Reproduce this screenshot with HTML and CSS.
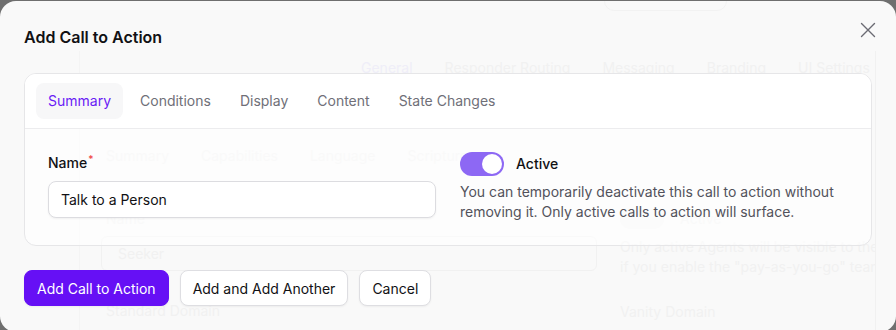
FILE: index.html
```html
<!DOCTYPE html>
<html lang="en">
<head>
<meta charset="utf-8">
<title>Add Call to Action</title>
<link rel="stylesheet" href="styles.css">
</head>
<body>
<div class="backdrop">
  <div class="modal">
    <div class="ghost" aria-hidden="true">
      <div class="g-pill"></div>
      <div class="g-card">
        <div class="g-tabs">
          <span class="g-active">General</span><span>Responder Routing</span><span>Messaging</span><span>Branding</span><span>UI Settings</span>
        </div>
        <div class="g-subtabs">
          <span>Summary</span><span>Capabilities</span><span>Language</span><span>Scripture</span>
        </div>
        <div class="g-grid">
          <div class="g-col">
            <div class="g-label">Name</div>
            <div class="g-input">Seeker</div>
            <div class="g-label g-label2">Standard Domain</div>
          </div>
          <div class="g-col">
            <div class="g-toggle-row"><span class="g-toggle"></span><span>Active</span></div>
            <div class="g-text">Only active Agents will be visible to the public<br>if you enable the "pay-as-you-go" team option</div>
            <div class="g-label g-label3">Vanity Domain</div>
          </div>
        </div>
      </div>
    </div>

    <div class="content">
      <div class="header">
        <h2 class="title">Add Call to Action</h2>
      </div>
      <button class="close" aria-label="Close">
        <svg width="16" height="16" viewBox="0 0 16 16" fill="none" stroke="#6b6b73" stroke-width="1.4" stroke-linecap="round"><path d="M1.5 1.5l13 13M14.5 1.5l-13 13"/></svg>
      </button>

      <div class="card">
        <div class="tabs">
          <span class="tab tab-active">Summary</span>
          <span class="tab">Conditions</span>
          <span class="tab">Display</span>
          <span class="tab">Content</span>
          <span class="tab">State Changes</span>
        </div>
        <div class="card-body">
          <div class="field">
            <label class="label">Name<span class="req">*</span></label>
            <div class="input">Talk to a Person</div>
          </div>
          <div class="field">
            <div class="toggle-row">
              <span class="toggle"><span class="knob"></span></span>
              <span class="label">Active</span>
            </div>
            <p class="help">You can temporarily deactivate this call to action without removing it. Only active calls to action will surface.</p>
          </div>
        </div>
      </div>

      <div class="footer">
        <button class="btn btn-primary">Add Call to Action</button>
        <button class="btn">Add and Add Another</button>
        <button class="btn">Cancel</button>
      </div>
    </div>
  </div>
</div>
</body>
</html>
```

FILE: styles.css
```css
* { box-sizing: border-box; }
html, body { margin: 0; padding: 0; }
body {
  background: #6f6f6f;
  font-family: Inter, "Noto Sans", "Liberation Sans", sans-serif;
  color: #111114;
  width: 896px;
  height: 330px;
  overflow: hidden;
}
.backdrop {
  padding-top: 1px;
}
.modal {
  position: relative;
  width: 896px;
  height: 331px;
  background: #f9f9f9;
  border-radius: 16px;
  overflow: hidden;
}

/* faint page content visible through the modal */
.ghost {
  position: absolute;
  inset: 0;
  color: #f1f1f1;
  font-size: 14px;
  line-height: 20px;
  pointer-events: none;
  white-space: nowrap;
}
.g-pill {
  position: absolute;
  left: 604px;
  top: -20px;
  width: 123px;
  height: 30px;
  border: 1px solid #f2f2f2;
  border-radius: 10px;
}
.g-card {
  position: absolute;
  left: 79px;
  top: 50px;
  right: 20px;
  bottom: -20px;
  border-right: 1px solid #f1f1f1;
  border-left: 1px solid #f4f4f4;
}
.g-tabs {
  display: flex;
  gap: 32px;
  padding-left: 281px;
  padding-top: 7px;
}
.g-active { color: #efeef8; }
.g-subtabs {
  display: flex;
  gap: 32px;
  padding-left: 26px;
  padding-top: 68px;
}
.g-grid {
  display: grid;
  grid-template-columns: 496px 1fr;
  gap: 23px;
  padding-left: 21px;
  padding-top: 43px;
}
.g-col { min-width: 0; overflow: hidden; }
.g-label { padding-left: 5px; }
.g-label2 { margin-top: 30px; }
.g-label3 { margin-top: 25px; padding-left: 0; }
.g-input {
  margin-top: 7px;
  height: 35px;
  border: 1px solid #f1f1f1;
  border-radius: 6px;
  padding: 7px 16px;
}
.g-toggle-row { display: flex; align-items: center; gap: 16px; }
.g-toggle { width: 44px; height: 20px; border-radius: 10px; background: #f4f4f4; }
.g-text { margin-top: 8px; }

/* modal content */
.content {
  position: relative;
  padding: 24px 24px 0;
}
.header { height: 25px; }
.title {
  margin: 0;
  font-size: 16px;
  line-height: 24px;
  font-weight: 600;
  color: #111114;
}
.close {
  position: absolute;
  top: 20px;
  right: 19px;
  width: 18px;
  height: 18px;
  padding: 1px;
  border: 0;
  background: none;
  display: flex;
}
.card {
  margin-top: 23px;
  border: 1px solid #e6e6e8;
  border-radius: 12px;
  overflow: hidden;
  background: rgba(255, 255, 255, 0.6);
}
.tabs {
  display: flex;
  gap: 5px;
  padding: 9px 11px;
  background: #ffffff;
  border-bottom: 1px solid #ececee;
}
.tab {
  padding: 8px 12px;
  font-size: 14px;
  line-height: 20px;
  font-weight: 400;
  color: #6f6f78;
  border-radius: 8px;
}
.tab-active {
  background: #f7f7f8;
  color: #6a1cf5;
}
.card-body {
  display: grid;
  grid-template-columns: 1fr 1fr;
  align-items: start;
  gap: 24px;
  padding: 24px 23px 23px;
}
.field { min-width: 0; }
.label {
  display: block;
  font-size: 14px;
  line-height: 20px;
  font-weight: 500;
  color: #111114;
}
.req {
  color: #ef4444;
  font-size: 10px;
  vertical-align: top;
  position: relative;
  top: -4px;
  margin-left: 1px;
}
.input {
  margin-top: 8px;
  height: 37px;
  border: 1px solid #dcdce0;
  border-radius: 8px;
  background: #ffffff;
  padding: 8px 12px;
  font-size: 14px;
  line-height: 19px;
  color: #111114;
  box-shadow: 0 1px 2px rgba(0, 0, 0, 0.05);
}
.toggle-row {
  display: flex;
  align-items: center;
  gap: 12px;
  margin-top: -1px;
}
.toggle {
  width: 44px;
  height: 24px;
  border-radius: 12px;
  background: #8d68f4;
  display: flex;
  justify-content: flex-end;
  padding: 2px;
}
.knob {
  width: 20px;
  height: 20px;
  border-radius: 50%;
  background: #ffffff;
}
.help {
  margin: 6px 0 0;
  font-size: 14px;
  line-height: 20px;
  color: #52525b;
}
.footer {
  display: flex;
  gap: 11px;
  margin-top: 24px;
}
.btn {
  height: 36px;
  padding: 0 12px;
  border: 1px solid #dedee2;
  border-radius: 8px;
  background: #ffffff;
  font-family: inherit;
  font-size: 14px;
  font-weight: 400;
  color: #111114;
  box-shadow: 0 1px 2px rgba(0, 0, 0, 0.05);
}
.btn-primary {
  background: #6610f5;
  border-color: #6610f5;
  color: #ffffff;
}
```
